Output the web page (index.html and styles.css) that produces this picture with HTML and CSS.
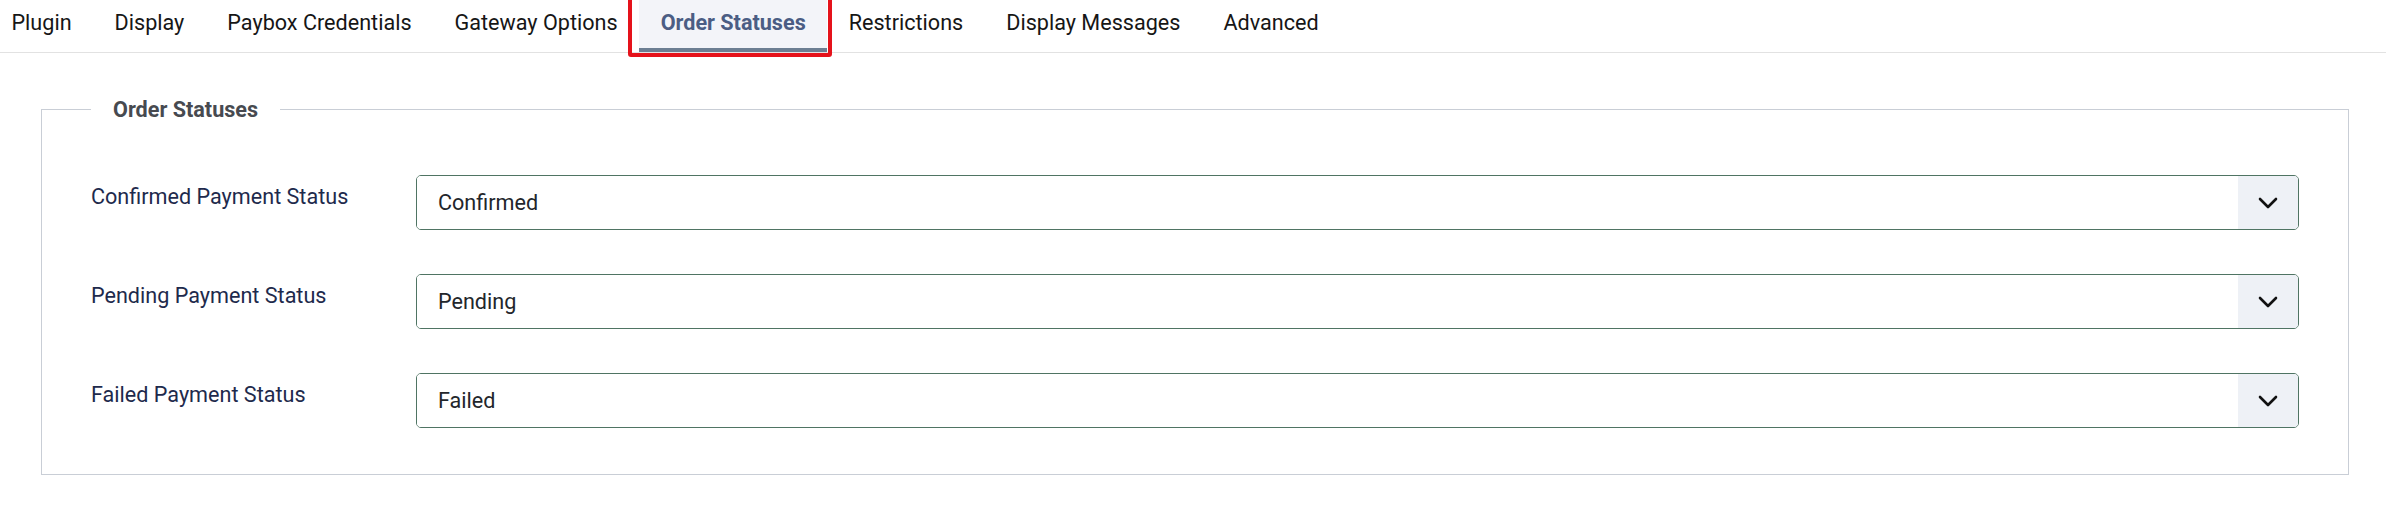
FILE: index.html
```html
<!DOCTYPE html>
<html lang="en">
<head>
    <meta charset="UTF-8">
    <meta name="viewport" content="width=device-width, initial-scale=1.0">
    <title>Paybox - Order Statuses</title>
    <link rel="stylesheet" href="styles.css">
</head>
<body>
    <nav class="tabs">
        <a class="tab" href="#plugin">Plugin</a>
        <a class="tab" href="#display">Display</a>
        <a class="tab" href="#credentials">Paybox Credentials</a>
        <a class="tab" href="#gateway">Gateway Options</a>
        <a class="tab active" href="#statuses">Order Statuses</a>
        <a class="tab" href="#restrictions">Restrictions</a>
        <a class="tab" href="#messages">Display Messages</a>
        <a class="tab" href="#advanced">Advanced</a>
    </nav>

    <div class="tab-content">
        <fieldset class="options">
            <legend>Order Statuses</legend>

            <div class="control-group">
                <label class="control-label" for="status_confirmed">Confirmed Payment Status</label>
                <div class="select-wrap">
                    <select id="status_confirmed" name="status_confirmed">
                        <option selected>Confirmed</option>
                        <option>Pending</option>
                        <option>Failed</option>
                    </select>
                    <span class="select-arrow">
                        <svg width="20" height="12" viewBox="0 0 20 12"><path d="M2 2l8 8 8-8" fill="none" stroke="#111" stroke-width="2.6" stroke-linecap="round" stroke-linejoin="round"/></svg>
                    </span>
                </div>
            </div>

            <div class="control-group">
                <label class="control-label" for="status_pending">Pending Payment Status</label>
                <div class="select-wrap">
                    <select id="status_pending" name="status_pending">
                        <option>Confirmed</option>
                        <option selected>Pending</option>
                        <option>Failed</option>
                    </select>
                    <span class="select-arrow">
                        <svg width="20" height="12" viewBox="0 0 20 12"><path d="M2 2l8 8 8-8" fill="none" stroke="#111" stroke-width="2.6" stroke-linecap="round" stroke-linejoin="round"/></svg>
                    </span>
                </div>
            </div>

            <div class="control-group">
                <label class="control-label" for="status_failed">Failed Payment Status</label>
                <div class="select-wrap">
                    <select id="status_failed" name="status_failed">
                        <option>Confirmed</option>
                        <option>Pending</option>
                        <option selected>Failed</option>
                    </select>
                    <span class="select-arrow">
                        <svg width="20" height="12" viewBox="0 0 20 12"><path d="M2 2l8 8 8-8" fill="none" stroke="#111" stroke-width="2.6" stroke-linecap="round" stroke-linejoin="round"/></svg>
                    </span>
                </div>
            </div>
        </fieldset>
    </div>
</body>
</html>
```

FILE: styles.css
```css
body {
    font-family: Roboto, "Noto Sans", Arial, sans-serif;
    font-size: 21.6px;
    margin: 0;
    padding: 0;
    background-color: #ffffff;
    color: #22262a;
}
.tabs {
    display: flex;
    margin-left: -10px;
    border-bottom: 1px solid #e2e2e2;
}
.tab {
    position: relative;
    display: block;
    padding: 0 21.5px 2px;
    line-height: 46px;
    border-bottom: 4px solid transparent;
    color: #161616;
    text-decoration: none;
}
.tab.active {
    background: #f3f4f9;
    border-bottom-color: #6c7e93;
    color: #4b5d84;
    font-weight: 700;
}
/* red highlight frame around the current tab */
.tab.active::after {
    content: "";
    position: absolute;
    top: -4px;
    left: -11px;
    right: -5px;
    bottom: -9px;
    border: 4px solid #e5121b;
    border-radius: 3px;
}
.tab-content {
    padding: 44px 37px 0 41px;
}
.options {
    margin: 0;
    padding: 53px 49px 46px;
    border: 1px solid #c9ced6;
}
.options legend {
    padding: 0 22px;
    line-height: 25px;
    font-weight: 700;
    color: #474a50;
}
.control-group {
    display: grid;
    grid-template-columns: 325px 1fr;
    margin-bottom: 44px;
}
.control-group:last-child {
    margin-bottom: 0;
}
.control-label {
    padding-top: 9px;
    line-height: 25px;
    color: #1e2a4c;
}
.select-wrap {
    display: flex;
    height: 55px;
    box-sizing: border-box;
    border: 1px solid #4f7463;
    border-radius: 5px;
    overflow: hidden;
}
.select-wrap select {
    flex: 1;
    appearance: none;
    -webkit-appearance: none;
    border: none;
    outline: none;
    background: #ffffff;
    padding: 0 21px;
    font-family: inherit;
    font-size: 21.6px;
    color: #23262b;
}
.select-arrow {
    display: flex;
    align-items: center;
    justify-content: center;
    width: 60px;
    background: #eef1f6;
}
```
